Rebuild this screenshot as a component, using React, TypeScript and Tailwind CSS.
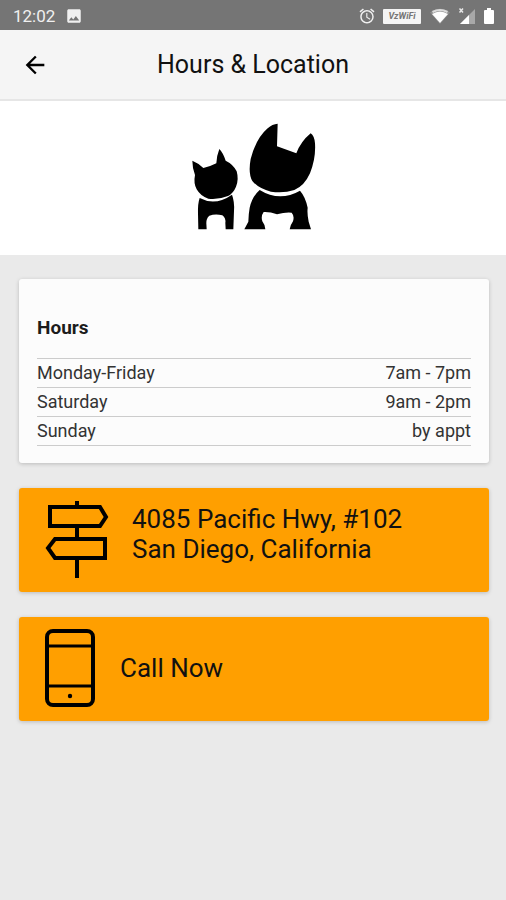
import type { ReactNode } from 'react';
import { MdAlarm, MdArrowBack, MdImage } from 'react-icons/md';

const hours = [
  { day: 'Monday-Friday', time: '7am - 7pm' },
  { day: 'Saturday', time: '9am - 2pm' },
  { day: 'Sunday', time: 'by appt' },
];

function StatusBar() {
  return (
    <div className="flex h-[30px] items-center justify-between bg-[#757575] pl-[13px] pr-[11px] pt-[2px] text-[#f0f0f0]">
      <div className="flex items-center gap-[10px]">
        <span className="text-[17px] leading-5">12:02</span>
        <MdImage size={18} />
      </div>
      <div className="flex items-center gap-[7px]">
        <MdAlarm size={18} />
        <span className="flex h-[15px] w-[38px] items-center justify-center rounded-[1px] bg-[#f4f4f4] text-[9px] font-bold italic leading-none text-[#757575]">VzWiFi</span>
        <svg width="22" height="16" viewBox="0 0 22 16" className="ml-[1px]">
          <path d="M1 4.500Q11-3 21 4.500L11 16Z" fill="#8e8e8e" />
          <path d="M3 6Q11 1 19 6L11 15Z" fill="#fff" />
          <path d="M3 3Q11-1 19 3L18 5Q11 1 4 5Z" fill="#dcdcdc" />
        </svg>
        <svg width="18" height="18" viewBox="0 0 18 18">
          <path d="M17 2V17H2Z" fill="#a8a8a8" />
          <path d="M11 8V17H2Z" fill="#fff" />
          <path d="M1.500 1.500L5 5.500M5 1.500L1.500 5.500" stroke="#e8e8e8" strokeWidth="1.500" />
        </svg>
        <svg width="12" height="17" viewBox="0 0 12 17">
          <path d="M4 0H8V2H10Q11 2 11 3V15Q11 16 10 16H2Q1 16 1 15V3Q1 2 2 2H4Z" fill="#fff" />
        </svg>
      </div>
    </div>
  );
}

function Logo() {
  return (
    <svg width="130" height="110" viewBox="24 18 390 330" role="img" aria-label="Cat and dog">
      {/* cat */}
      <path d="M37 137Q53 143 70 159Q90 155 109 145Q110 122 118 102Q129 113 137 137Q160 148 170 169Q177 194 168 215Q160 235 144 243Q118 254 85 251Q62 244 50 223Q40 205 45 180Q37 158 37 137Z" />
      <path d="M59 249Q106 274 156 239Q164 260 162 288L160 343H137L136 324Q138 309 127 301Q106 296 88 302Q78 311 79 325L80 343H55L54 296Q53 266 59 249Z" />
      {/* dog */}
      <path d="M293 26L291 94L349 115Q362 80 392 55Q403 62 405 85Q408 130 390 175Q373 213 343 225Q310 236 273 230Q236 221 217 198Q204 175 212 132Q228 70 263 40Q277 27 293 26Z" />
      <path d="M239 225Q299 262 360 227Q376 245 383 278Q381 298 386 320L393 343H329Q331 330 339 319Q344 303 335 293Q316 291 291 298Q270 290 251 291Q242 303 247 319Q255 329 256 343H193L205 320Q206 294 209 278Q217 244 239 225Z" />
    </svg>
  );
}

function SignpostIcon() {
  return (
    <svg width="64" height="78" viewBox="0 0 64 78" fill="none" stroke="#000" strokeWidth="4" aria-hidden="true">
      <path d="M32 1V7M32 26V39M32 58V78" />
      <path d="M5 7H55L61 17L55 26H5Z" />
      <path d="M60 39H10L3 48L10 58H60Z" />
    </svg>
  );
}

function PhoneIcon() {
  return (
    <svg width="52" height="78" viewBox="0 0 52 78" fill="none" stroke="#000" strokeWidth="4" aria-hidden="true">
      <rect x="2" y="2" width="46" height="74" rx="6" />
      <path d="M2 17H48M2 57H48" strokeWidth="3" />
      <circle cx="25" cy="67" r="2.200" fill="#000" stroke="none" />
    </svg>
  );
}

function ActionCard(props: { href: string; icon: ReactNode; children: ReactNode }) {
  return (
    <a
      href={props.href}
      className="flex min-h-[104px] items-start gap-[23px] rounded-[3px] bg-[#ff9f00] px-[26px] pb-[14px] pt-[12px] text-[26px] leading-[30px] text-[#111] shadow-[0_1px_4px_rgba(0,0,0,0.2)]"
    >
      {props.icon}
      {props.children}
    </a>
  );
}

export default function App() {
  return (
    <div className="min-h-screen bg-[#eaeaea] font-[Roboto,sans-serif]">
      <StatusBar />
      <header className="grid h-[71px] grid-cols-[70px_1fr_70px] items-center border-b-2 border-[#e6e6e6] bg-[#f5f5f5] pt-[1px]">
        <button type="button" aria-label="Back" className="flex h-full items-center justify-center text-black">
          <MdArrowBack size={28} />
        </button>
        <h1 className="text-center text-[25px] leading-8 text-[#111]">Hours &amp; Location</h1>
      </header>
      <div className="flex h-[154px] justify-center bg-white pt-[20px]">
        <Logo />
      </div>
      <main className="flex flex-col gap-[25px] pl-[19px] pr-[17px] pt-[24px]">
        <section className="rounded-[3px] bg-[#fcfcfc] px-[18px] pb-[17px] pt-[37px] shadow-[0_1px_4px_rgba(0,0,0,0.2)]">
          <h2 className="mb-[18px] text-[19px] font-bold leading-6 text-[#1c1c1c]">Hours</h2>
          <table className="w-full border-collapse text-[18px] leading-7 text-[#333]">
            <tbody>
              {hours.map(row => (
                <tr key={row.day} className="border-y border-[#ccc]">
                  <td className="p-0">{row.day}</td>
                  <td className="p-0 text-right">{row.time}</td>
                </tr>
              ))}
            </tbody>
          </table>
        </section>
        <ActionCard href="#map" icon={<SignpostIcon />}>
          <span className="pt-[4px]">
            4085 Pacific Hwy, #102
            <br />
            San Diego, California
          </span>
        </ActionCard>
        <ActionCard href="#call" icon={<PhoneIcon />}>
          <span className="self-center">Call Now</span>
        </ActionCard>
      </main>
    </div>
  );
}
